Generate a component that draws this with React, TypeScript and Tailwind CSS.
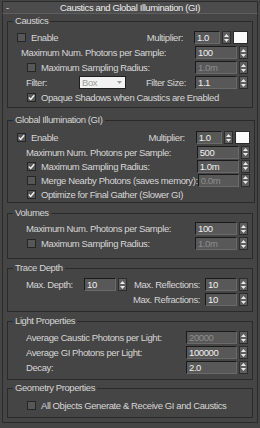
import React from 'react';

const font = "font-['Liberation_Sans',Arial,sans-serif]";

const Check = ({ on }: { on?: boolean }) => (
    <div className="w-[9px] h-[9px] shrink-0 border border-[#262626] bg-[#575757] flex items-center justify-center">
        {on &&
            <svg width="7" height="7" viewBox="0 0 7 7">
                <path d="M0.8 3.6 L2.7 5.5 L6.2 1.2" stroke="#f2f2f2" strokeWidth="1.4" fill="none" />
            </svg>
        }
    </div>
);

const Arrows = () => (
    <div className="w-[9px] h-[13px] shrink-0 bg-[#5e5e5e] border border-[#2c2c2c] flex flex-col items-center justify-center gap-[2px]">
        <svg width="5" height="3" viewBox="0 0 5 3"><path d="M0 3 L2.5 0 L5 3 Z" fill="#eaeaea" /></svg>
        <svg width="5" height="3" viewBox="0 0 5 3"><path d="M0 0 L2.5 3 L5 0 Z" fill="#eaeaea" /></svg>
    </div>
);

const Spinner = ({ value, width, off }: { value: string; width: string; off?: boolean }) => (
    <div className="flex items-center gap-[2px] shrink-0">
        <div className={`${width} h-[13px] border border-[#1a1a1a] border-r-[#6a6a6a] border-b-[#6a6a6a] bg-[#585858] pl-[2px] leading-[11px] ${off ? 'text-[#8e8e8e]' : 'text-[#f0f0f0]'}`}>
            {value}
        </div>
        <Arrows />
    </div>
);

const Group = ({ title, className, children }: { title: string; className: string; children: React.ReactNode }) => (
    <fieldset className={`border border-[#2a2a2a] mx-[4px] ${className}`}>
        <legend className="ml-[5px] px-[2px] leading-[12px] text-[#d6d6d6]">{title}</legend>
        {children}
    </fieldset>
);

const App = () => {
    return (
        <div className={`w-[260px] h-[428px] bg-[#454545] ${font} text-[9.5px] leading-[11px] tracking-[-0.4px] whitespace-nowrap text-[#d6d6d6] overflow-hidden pt-[1px]`}>
            {/* Rollout title */}
            <div className="mx-[2px] h-[13px] bg-[#4c4c4c] border border-[#2b2b2b] border-b-[#5e5e5e] flex items-center relative">
                <span className="absolute left-[3px] top-[0px] text-[#e0e0e0]">-</span>
                <div className="flex-1 text-center leading-[12px] text-[#ececec]">Caustics and Global Illumination (GI)</div>
            </div>

            <div className="mx-[2px] border-x border-b border-[#2b2b2b] h-[409px] flex flex-col">

                {/* Caustics */}
                <Group title="Caustics" className="mt-[1px] pt-[3px] pb-[2px]">
                    <div className="flex items-center h-[15px] pl-[9px] pr-[4px]">
                        <Check />
                        <span className="ml-[5px]">Enable</span>
                        <span className="ml-auto mr-[11px]">Multiplier:</span>
                        <Spinner value="1.0" width="w-[26px]" />
                        <div className="ml-[2px] w-[15px] h-[13px] bg-[#fafafa] border border-[#2a2a2a] shrink-0" />
                    </div>
                    <div className="flex items-center h-[15px] pl-[13px] pr-[4px]">
                        <span>Maximum Num. Photons per Sample:</span>
                        <span className="ml-auto" />
                        <Spinner value="100" width="w-[42px]" />
                    </div>
                    <div className="flex items-center h-[15px] pl-[19px] pr-[4px]">
                        <Check />
                        <span className="ml-[5px]">Maximum Sampling Radius:</span>
                        <span className="ml-auto" />
                        <Spinner value="1.0m" width="w-[42px]" off />
                    </div>
                    <div className="flex items-center h-[15px] pl-[18px] pr-[4px]">
                        <span className="w-[53px]">Filter:</span>
                        <div className="w-[47px] h-[13px] bg-[#f2f2f2] border border-[#1e1e1e] flex items-center pl-[2px] pr-[3px] text-[#9a9a9a]">
                            <span>Box</span>
                            <svg className="ml-auto" width="5" height="3" viewBox="0 0 5 3"><path d="M0 0 L2.5 3 L5 0 Z" fill="#9a9a9a" /></svg>
                        </div>
                        <span className="ml-auto mr-[9px]">Filter Size:</span>
                        <Spinner value="1.1" width="w-[42px]" />
                    </div>
                    <div className="flex items-center h-[15px] pl-[19px] pr-[4px]">
                        <Check on />
                        <span className="ml-[5px]">Opaque Shadows when Caustics are Enabled</span>
                    </div>
                </Group>

                {/* Global Illumination */}
                <Group title="Global Illumination (GI)" className="mt-[6px] pt-[4px] pb-[1px]">
                    <div className="flex items-center h-[15px] pl-[9px] pr-[4px]">
                        <Check on />
                        <span className="ml-[5px]">Enable</span>
                        <span className="ml-auto mr-[11px]">Multiplier:</span>
                        <Spinner value="1.0" width="w-[26px]" />
                        <div className="ml-[2px] w-[15px] h-[13px] bg-[#fafafa] border border-[#2a2a2a] shrink-0" />
                    </div>
                    <div className="flex items-center h-[14px] pl-[18px] pr-[4px]">
                        <span>Maximum Num. Photons per Sample:</span>
                        <span className="ml-auto" />
                        <Spinner value="500" width="w-[42px]" />
                    </div>
                    <div className="flex items-center h-[14px] pl-[19px] pr-[4px]">
                        <Check on />
                        <span className="ml-[5px]">Maximum Sampling Radius:</span>
                        <span className="ml-auto" />
                        <Spinner value="1.0m" width="w-[42px]" />
                    </div>
                    <div className="flex items-center h-[14px] pl-[19px] pr-[4px]">
                        <Check />
                        <span className="ml-[5px]">Merge Nearby Photons (saves memory):</span>
                        <span className="ml-auto" />
                        <Spinner value="0.0m" width="w-[41px]" off />
                    </div>
                    <div className="flex items-center h-[14px] pl-[19px] pr-[4px]">
                        <Check on />
                        <span className="ml-[5px]">Optimize for Final Gather (Slower GI)</span>
                    </div>
                </Group>

                {/* Volumes */}
                <Group title="Volumes" className="mt-[4px] pt-[2px] pb-[7px]">
                    <div className="flex items-center h-[15px] pl-[18px] pr-[4px]">
                        <span>Maximum Num. Photons per Sample:</span>
                        <span className="ml-auto" />
                        <Spinner value="100" width="w-[42px]" />
                    </div>
                    <div className="flex items-center h-[15px] pl-[19px] pr-[4px]">
                        <Check />
                        <span className="ml-[5px]">Maximum Sampling Radius:</span>
                        <span className="ml-auto" />
                        <Spinner value="1.0m" width="w-[42px]" off />
                    </div>
                </Group>

                {/* Trace Depth */}
                <Group title="Trace Depth" className="mt-[3px] pt-[3px] pb-[4px]">
                    <div className="flex items-center h-[15px] pl-[18px] pr-[4px]">
                        <span className="w-[58px]">Max. Depth:</span>
                        <Spinner value="10" width="w-[32px]" />
                        <span className="ml-auto mr-[5px]">Max. Reflections:</span>
                        <Spinner value="10" width="w-[32px]" />
                    </div>
                    <div className="flex items-center h-[15px] pl-[18px] pr-[4px]">
                        <span className="ml-auto mr-[5px]">Max. Refractions:</span>
                        <Spinner value="10" width="w-[32px]" />
                    </div>
                </Group>

                {/* Light Properties */}
                <Group title="Light Properties" className="mt-[3px] pt-[3px] pb-[5px]">
                    <div className="flex items-center h-[15px] pl-[18px] pr-[4px]">
                        <span>Average Caustic Photons per Light:</span>
                        <span className="ml-auto" />
                        <Spinner value="20000" width="w-[51px]" off />
                    </div>
                    <div className="flex items-center h-[15px] pl-[18px] pr-[4px]">
                        <span>Average GI Photons per Light:</span>
                        <span className="ml-auto" />
                        <Spinner value="100000" width="w-[51px]" />
                    </div>
                    <div className="flex items-center h-[14px] pl-[18px] pr-[4px]">
                        <span>Decay:</span>
                        <span className="ml-auto" />
                        <Spinner value="2.0" width="w-[51px]" />
                    </div>
                </Group>

                {/* Geometry Properties */}
                <Group title="Geometry Properties" className="mt-[2px] pt-[4px] pb-[4px]">
                    <div className="flex items-center h-[15px] pl-[19px] pr-[4px]">
                        <Check />
                        <span className="ml-[5px]">All Objects Generate &amp; Receive GI and Caustics</span>
                    </div>
                </Group>
            </div>
        </div>
    )
}

export default App
